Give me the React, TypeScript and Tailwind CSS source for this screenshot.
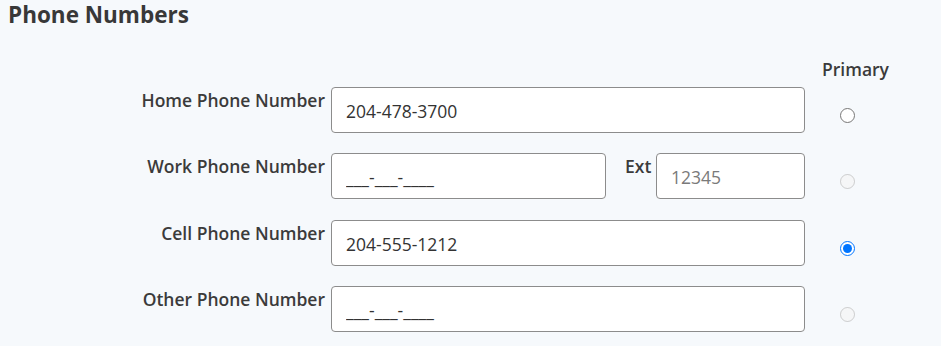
import React from "react";

const font = { fontFamily: '"Open Sans", sans-serif' };

function Row({
  label,
  value,
  checked,
  disabled,
  ext,
}: {
  label: string;
  value?: string;
  checked?: boolean;
  disabled?: boolean;
  ext?: boolean;
}) {
  return (
    <div className="flex items-start h-[46px]">
      <div className="w-[331px] pr-[6px] pt-[1px] text-right text-[17.5px] leading-[24px] font-semibold text-[#3b3b3b]">
        {label}
      </div>
      {ext ? (
        <div className="flex items-start w-[474px]">
          <input
            readOnly
            defaultValue={value}
            className="w-[275px] h-[46px] bg-white border border-[#8c8c8c] rounded-[4px] pl-[14px] pt-[2px] text-[17.5px] text-[#333] outline-none"
          />
          <div className="ml-[19px] w-[31px] pt-[1px] text-[17.5px] leading-[24px] font-semibold text-[#3b3b3b]">Ext</div>
          <input
            readOnly
            placeholder="12345"
            className="w-[149px] h-[46px] bg-white border border-[#8c8c8c] rounded-[4px] pl-[14px] pt-[2px] text-[17.5px] text-[#333] placeholder:text-[#7a7a7a] outline-none"
          />
        </div>
      ) : (
        <input
          readOnly
          defaultValue={value}
          className="w-[474px] h-[46px] bg-white border border-[#8c8c8c] rounded-[4px] pl-[14px] pt-[2px] text-[17.5px] text-[#333] outline-none"
        />
      )}
      <div className="pt-[21px] pl-[35px]">
        <input
          type="radio"
          name="primary"
          defaultChecked={checked}
          disabled={disabled}
          className="m-0 block w-[15px] h-[15px]"
        />
      </div>
    </div>
  );
}

export default function App() {
  return (
    <div className="w-[941px] h-[346px] bg-[#f6f9fc] overflow-hidden" style={font}>
      <h2 className="pl-[8px] text-[22.5px] leading-[30px] font-bold text-[#383838]">Phone Numbers</h2>
      <div className="mt-[27px] h-[24px] flex">
        <div className="w-[822px]" />
        <div className="text-[17.5px] leading-[24px] font-semibold text-[#3b3b3b]">Primary</div>
      </div>
      <div className="mt-[6px] flex flex-col gap-[20.33px]">
        <Row label="Home Phone Number" value="204-478-3700" />
        <Row label="Work Phone Number" value="___-___-____" ext disabled />
        <Row label="Cell Phone Number" value="204-555-1212" checked />
        <Row label="Other Phone Number" value="___-___-____" disabled />
      </div>
    </div>
  );
}
